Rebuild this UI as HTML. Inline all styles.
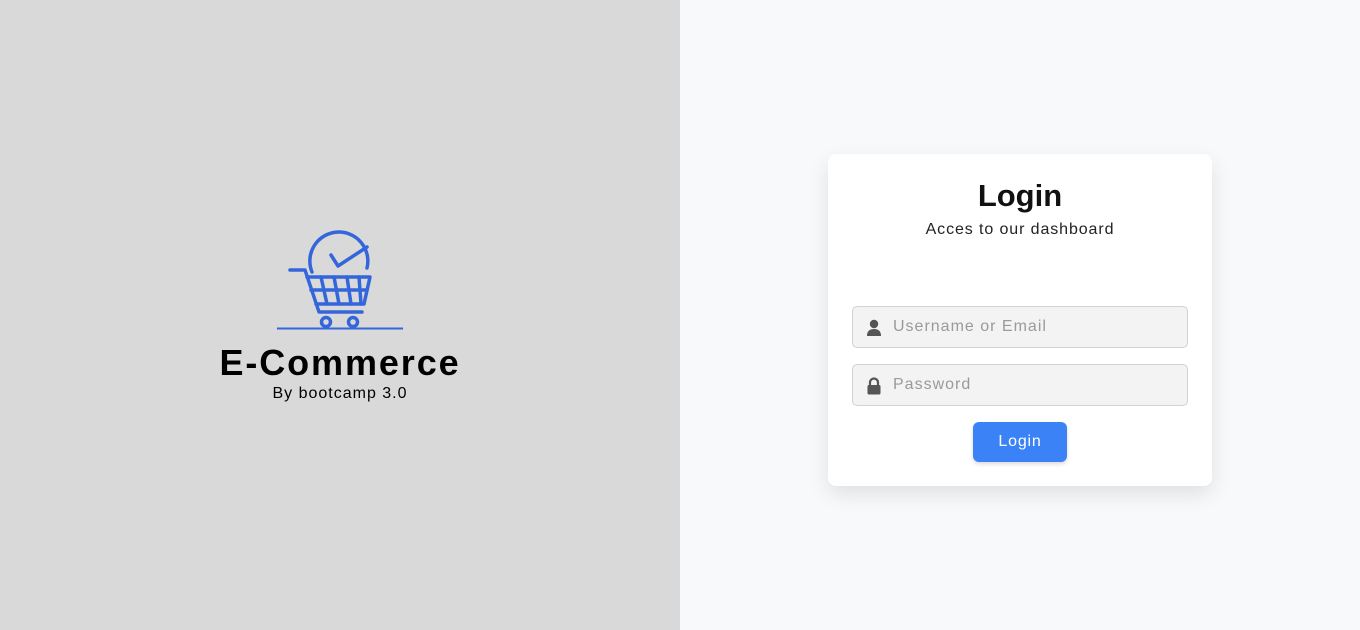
<!DOCTYPE html>
<html><head><meta charset="utf-8"><style>
*{margin:0;padding:0;box-sizing:border-box}
body{width:1360px;height:630px;font-family:"Liberation Sans",sans-serif;position:relative;overflow:hidden;background:#f8f9fa}
.left{position:absolute;left:0;top:0;width:680px;height:630px;background:#d9d9d9}
.brand{position:absolute;left:0;width:680px;text-align:center;color:#000}
.card{position:absolute;left:828px;top:154px;width:384px;height:332px;background:#fff;border-radius:8px;box-shadow:0 8px 20px rgba(0,0,0,0.1)}
.inp{position:absolute;left:24px;width:336px;height:42px;background:#f3f3f3;border:1px solid #d2d2d2;border-radius:5px}
.inp span{position:absolute;left:40px;top:11px;font-size:16px;color:#9a9a9a;letter-spacing:1px}
.inp svg{position:absolute;left:13px;top:12px}
.btn{position:absolute;left:145px;top:268px;width:94px;height:40px;background:#3b82f6;border-radius:6px;color:#fff;font-size:16px;text-align:center;line-height:40px;box-shadow:0 2px 4px rgba(0,0,0,0.15);letter-spacing:0.8px}
</style></head><body>
<div class="left">
<svg style="position:absolute;left:0;top:0" width="680" height="340">
<g fill="none" stroke="#3466db" stroke-width="3.5" stroke-linecap="round" stroke-linejoin="round">
<path d="M312 272 A29 29 0 1 1 367 268"/>
<path d="M331 255 L338 266 L367 247"/>
<path d="M290 270 L305 270 L319 312 L362 312"/>
<path d="M307 277 L370 277 L364 304 L316 304"/>
<path d="M311 290 L367 290"/>
<path d="M321 277 L327 304 M334 277 L339 304 M347 277 L351 304 M359 277 L361 304"/>
<circle cx="326" cy="322" r="4.5"/><circle cx="353" cy="322" r="4.5"/>
</g>
<line x1="277" y1="328.5" x2="403" y2="328.5" stroke="#3466db" stroke-width="2"/>
</svg>
<div class="brand" style="top:342px;font-size:36px;font-weight:bold;letter-spacing:1.9px">E-Commerce</div>
<div class="brand" style="top:385px;font-size:16px;letter-spacing:1px">By bootcamp 3.0</div>
</div>
<div class="card">
<div style="position:absolute;top:24px;width:100%;text-align:center;font-size:31px;font-weight:bold;color:#111">Login</div>
<div style="position:absolute;top:67px;width:100%;text-align:center;font-size:16px;color:#222;letter-spacing:0.9px">Acces to our dashboard</div>
<div class="inp" style="top:152px"><svg width="16" height="18" viewBox="0 0 16 18"><circle cx="8" cy="5" r="4.2" fill="#555"/><path d="M1 17 Q1 10 8 10 Q15 10 15 17 Z" fill="#555"/></svg><span>Username or Email</span></div>
<div class="inp" style="top:210px"><svg width="16" height="18" viewBox="0 0 16 18"><path d="M4 8 V5.5 A4 4 0 0 1 12 5.5 V8" fill="none" stroke="#555" stroke-width="2.2"/><rect x="1.5" y="8" width="13" height="9.5" rx="1.5" fill="#555"/></svg><span>Password</span></div>
<div class="btn">Login</div>
</div>
</body></html>
